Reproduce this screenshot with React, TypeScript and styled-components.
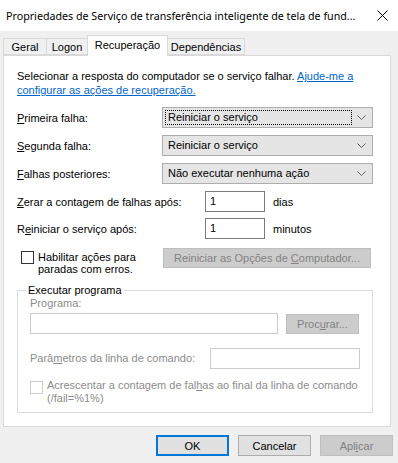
import React from 'react';
import styled, { createGlobalStyle } from 'styled-components';

const GlobalStyle = createGlobalStyle`
  html, body {
    margin: 0;
    padding: 0;
    background: #f0f0f0;
  }
  body {
    font-family: 'Liberation Sans', Arial, sans-serif;
    font-size: 11px;
    color: #000;
  }
`;

export default function App(): JSX.Element {
  return (
    <>
      <GlobalStyle />
      <Window>
        <TitleBar>
          <Title>Propriedades de Serviço de transferência inteligente de tela de fund...</Title>
          <CloseBox>
            <svg width="11" height="11" viewBox="0 0 11 11">
              <path d="M0.5 0.5 L10.5 10.5 M10.5 0.5 L0.5 10.5" stroke="#000" strokeWidth="1" />
            </svg>
          </CloseBox>
        </TitleBar>

        <TabStrip>
          <Tab $width={43}>Geral</Tab>
          <Tab $width={41}>Logon</Tab>
          <Tab $width={80} $active>
            Recuperação
          </Tab>
          <Tab $width={77}>Dependências</Tab>
        </TabStrip>

        <Panel>
          <Intro>
            <span>Selecionar a resposta do computador se o serviço falhar. </span>
            <HelpLink>Ajude-me a</HelpLink>
            <br />
            <HelpLink>configurar as ações de recuperação.</HelpLink>
          </Intro>

          <ComboRows>
            <FieldRow>
              <Label>
                <u>P</u>rimeira falha:
              </Label>
              <Combo>
                <ComboText $focused>Reiniciar o serviço</ComboText>
                <Chevron />
              </Combo>
            </FieldRow>
            <FieldRow>
              <Label>
                <u>S</u>egunda falha:
              </Label>
              <Combo>
                <ComboText>Reiniciar o serviço</ComboText>
                <Chevron />
              </Combo>
            </FieldRow>
            <FieldRow>
              <Label>
                <u>F</u>alhas posteriores:
              </Label>
              <Combo>
                <ComboText>Não executar nenhuma ação</ComboText>
                <Chevron />
              </Combo>
            </FieldRow>
          </ComboRows>

          <NumberRows>
            <FieldRow>
              <NumLabel>
                <u>Z</u>erar a contagem de falhas após:
              </NumLabel>
              <NumInput>1</NumInput>
              <Unit>dias</Unit>
            </FieldRow>
            <FieldRow>
              <NumLabel>
                R<u>e</u>iniciar o serviço após:
              </NumLabel>
              <NumInput>1</NumInput>
              <Unit>minutos</Unit>
            </FieldRow>
          </NumberRows>

          <CheckRow>
            <CheckLabel>
              <CheckBox />
              <span>
                Habilitar ações para
                <br />
                paradas com erros.
              </span>
            </CheckLabel>
            <DisabledButton $width={208}>
              <span>
                Reiniciar as Opções de <u>C</u>omputador...
              </span>
            </DisabledButton>
          </CheckRow>

          <Group>
            <Legend>Executar programa</Legend>
            <GrayText>
              Pro<u>g</u>rama:
            </GrayText>
            <ProgramRow>
              <DisabledInput $width={248} />
              <DisabledButton $width={73}>
                <span>
                  Proc<u>u</u>rar...
                </span>
              </DisabledButton>
            </ProgramRow>
            <ParamRow>
              <GrayText>
                Parâ<u>m</u>etros da linha de comando:
              </GrayText>
              <DisabledInput $width={150} />
            </ParamRow>
            <AppendRow>
              <CheckBox $disabled />
              <GrayText>
                Acrescentar a contagem de fal<u>h</u>as ao final da linha de comando
                <br />
                (/fail=%1%)
              </GrayText>
            </AppendRow>
          </Group>
        </Panel>

        <ButtonBar>
          <DialogButton $default>OK</DialogButton>
          <DialogButton>Cancelar</DialogButton>
          <DialogButton $disabled>
            <span>
              Apl<u>i</u>car
            </span>
          </DialogButton>
        </ButtonBar>
      </Window>
    </>
  );
}

function Chevron(): JSX.Element {
  return (
    <ChevronBox>
      <svg width="9" height="5" viewBox="0 0 9 5">
        <path d="M0.5 0.5 L4.5 4.5 L8.5 0.5" stroke="#606060" strokeWidth="1" fill="none" />
      </svg>
    </ChevronBox>
  );
}

const Window = styled.div`
  width: 398px;
  height: 463px;
  background: #f0f0f0;
  overflow: hidden;
  display: flex;
  flex-direction: column;
`;

const TitleBar = styled.div`
  height: 31px;
  flex-shrink: 0;
  background: #fff;
  display: flex;
  align-items: center;
  justify-content: space-between;
  padding: 0 0 0 6px;
  font-family: 'Noto Sans', 'Liberation Sans', sans-serif;
  font-size: 10.7px;
`;

const Title = styled.span`
  white-space: nowrap;
`;

const CloseBox = styled.span`
  width: 30px;
  display: flex;
  align-items: center;
  justify-content: center;
  flex-shrink: 0;
  margin-right: 1px;
`;

const TabStrip = styled.div`
  display: flex;
  align-items: flex-end;
  height: 24px;
  flex-shrink: 0;
  padding-left: 3px;
  position: relative;
  z-index: 1;
`;

const Tab = styled.div<{ $width: number; $active?: boolean }>`
  width: ${(p) => p.$width + 1}px;
  height: ${(p) => (p.$active ? '21px' : '17px')};
  margin-bottom: ${(p) => (p.$active ? '-1px' : '0')};
  display: flex;
  justify-content: center;
  align-items: ${(p) => (p.$active ? 'flex-start' : 'center')};
  padding-top: ${(p) => (p.$active ? '3px' : '0')};
  box-sizing: border-box;
  background: ${(p) => (p.$active ? '#fff' : '#f0f0f0')};
  border: 1px solid #d9d9d9;
  border-bottom: ${(p) => (p.$active ? 'none' : '1px solid #d9d9d9')};
  margin-left: -1px;
  position: relative;
  z-index: ${(p) => (p.$active ? 2 : 1)};
  &:first-child {
    margin-left: 0;
  }
`;

const Panel = styled.div`
  margin: 0 7px 0 3px;
  height: 372px;
  flex-shrink: 0;
  box-sizing: border-box;
  background: #fff;
  border: 1px solid #d9d9d9;
  padding: 13px 17px 0 13px;
  display: flex;
  flex-direction: column;
`;

const Intro = styled.div`
  line-height: 14px;
`;

const HelpLink = styled.span`
  color: #0066cc;
  text-decoration: underline;
`;

const ComboRows = styled.div`
  display: flex;
  flex-direction: column;
  gap: 7px;
  margin-top: 10px;
`;

const FieldRow = styled.div`
  display: flex;
  align-items: center;
`;

const Label = styled.span`
  width: 145px;
  flex-shrink: 0;
`;

const Combo = styled.div`
  width: 211px;
  height: 21px;
  box-sizing: border-box;
  background: #e5e5e5;
  border: 1px solid #adadad;
  display: flex;
  align-items: center;
  padding: 2px;
`;

const ComboText = styled.div<{ $focused?: boolean }>`
  flex: 1;
  height: 15px;
  line-height: 13px;
  padding-left: 2px;
  box-sizing: border-box;
  border: 1px ${(p) => (p.$focused ? 'dotted #000' : 'solid transparent')};
`;

const ChevronBox = styled.span`
  width: 18px;
  display: flex;
  justify-content: center;
  align-items: center;
`;

const NumberRows = styled.div`
  display: flex;
  flex-direction: column;
  gap: 6px;
  margin-top: 7px;
`;

const NumLabel = styled.span`
  width: 188px;
  flex-shrink: 0;
`;

const NumInput = styled.div`
  width: 60px;
  height: 21px;
  box-sizing: border-box;
  border: 1px solid #7a7a7a;
  background: #fff;
  padding: 3px 0 0 4px;
  line-height: 13px;
`;

const Unit = styled.span`
  margin-left: 8px;
`;

const CheckRow = styled.div`
  display: flex;
  align-items: flex-start;
  margin-top: 9px;
`;

const CheckLabel = styled.div`
  display: flex;
  align-items: flex-start;
  gap: 4px;
  width: 142px;
  flex-shrink: 0;
  padding-left: 4px;
  line-height: 12px;
  padding-top: 5px;
  & > span {
    margin-top: -2px;
  }
`;

const CheckBox = styled.span<{ $disabled?: boolean }>`
  display: inline-block;
  width: 13px;
  height: 13px;
  box-sizing: border-box;
  border: 1px solid ${(p) => (p.$disabled ? '#cccccc' : '#333')};
  background: #fff;
  flex-shrink: 0;
  margin-top: 2px;
`;

const DisabledButton = styled.div<{ $width: number }>`
  width: ${(p) => p.$width}px;
  height: 20px;
  box-sizing: border-box;
  background: #cccccc;
  border: 1px solid #bfbfbf;
  color: #838383;
  display: flex;
  align-items: center;
  justify-content: center;
  flex-shrink: 0;
`;

const Group = styled.fieldset`
  margin: 9px 0 0;
  width: 356px;
  height: 129px;
  box-sizing: border-box;
  border: 1px solid #dcdcdc;
  padding: 0 12px 0 12px;
  display: flex;
  flex-direction: column;
`;

const Legend = styled.legend`
  padding: 0 2px;
  margin-left: -4px;
  line-height: 13px;
`;

const GrayText = styled.span`
  color: #8c8c8c;
  line-height: 13px;
`;

const ProgramRow = styled.div`
  display: flex;
  align-items: center;
  gap: 8px;
  margin-top: 3px;
`;

const DisabledInput = styled.div<{ $width: number }>`
  width: ${(p) => p.$width}px;
  height: 21px;
  box-sizing: border-box;
  border: 1px solid #cccccc;
  background: #fff;
`;

const ParamRow = styled.div`
  display: flex;
  align-items: center;
  justify-content: space-between;
  width: 330px;
  margin-top: 14px;
`;

const AppendRow = styled.div`
  display: flex;
  align-items: flex-start;
  gap: 4px;
  margin-top: 10px;
`;

const ButtonBar = styled.div`
  display: flex;
  justify-content: flex-end;
  gap: 9px;
  padding: 8px 5px 0 0;
`;

const DialogButton = styled.div<{ $default?: boolean; $disabled?: boolean }>`
  width: 73px;
  height: 21px;
  box-sizing: border-box;
  display: flex;
  align-items: center;
  justify-content: center;
  background: ${(p) => (p.$disabled ? '#cccccc' : '#e1e1e1')};
  color: ${(p) => (p.$disabled ? '#838383' : '#000')};
  border: ${(p) =>
    p.$default ? '2px solid #0078d7' : p.$disabled ? '1px solid #bfbfbf' : '1px solid #adadad'};
`;
